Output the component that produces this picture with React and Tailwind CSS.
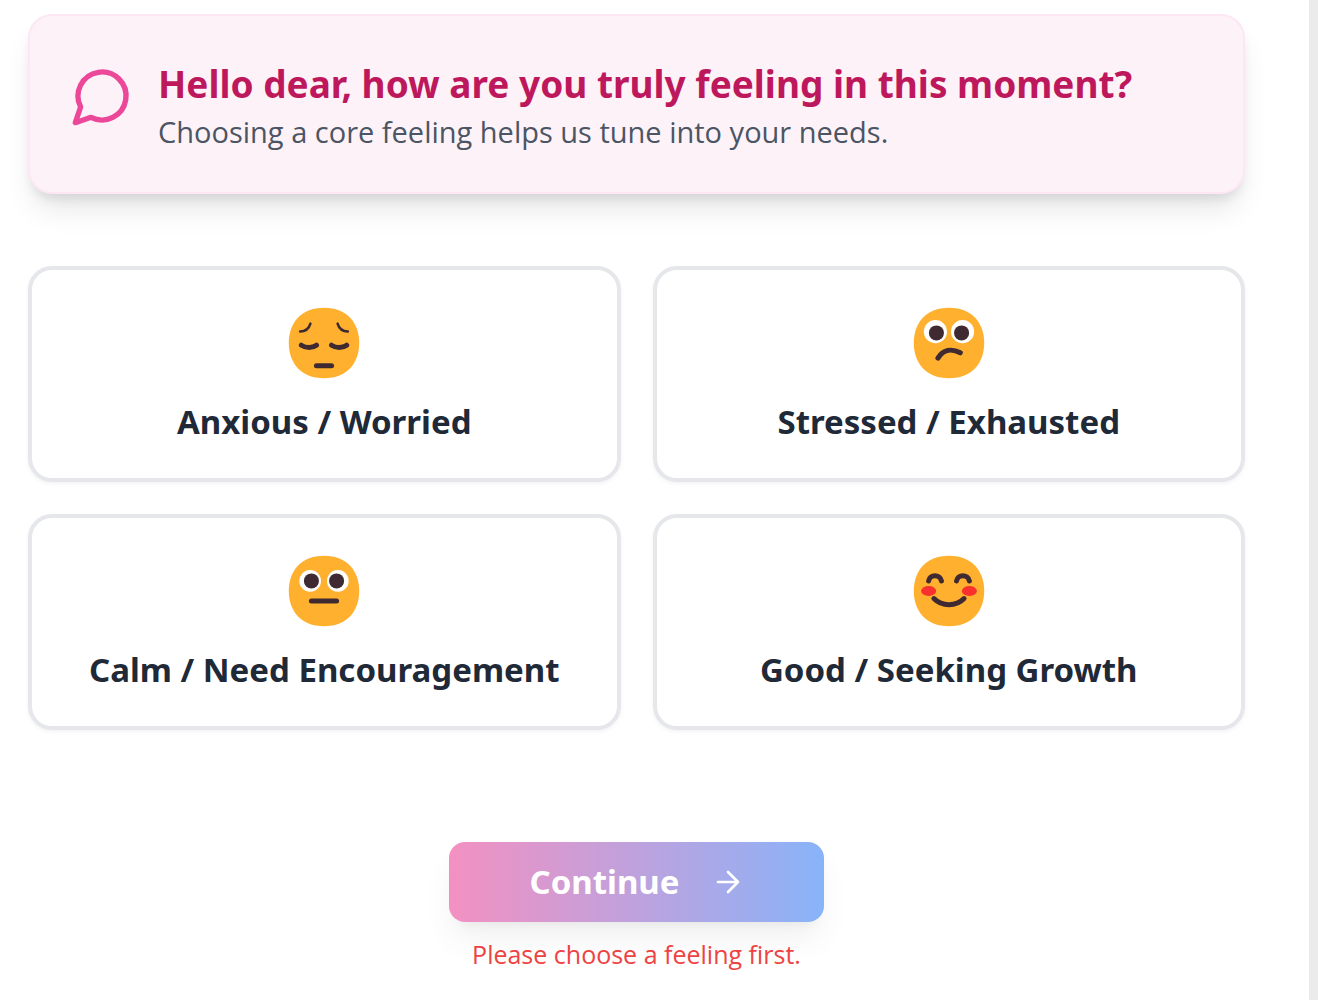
import { useState } from "react";

const INK = "#402A32";

function Face({ children }) {
  return (
    <svg viewBox="0.1 0.1 31.8 31.8" className="size-20" fill="none" aria-hidden="true">
      <path
        d="M16 30c9.33 0 14-6.27 14-14S25.33 2 16 2 2 8.27 2 16s4.67 14 14 14Z"
        fill="#FFB02E"
      />
      {children}
    </svg>
  );
}

function Pensive() {
  return (
    <Face>
      <g stroke={INK} strokeLinecap="round">
        <path d="M6.5 11.4c2 0 3.5-1 4.1-3.1M25.5 11.4c-2 0-3.5-1-4.1-3.1" />
        <path d="M7 16.9c1.8 1.2 4.4 1.2 6 0M19 16.9c1.8 1.2 4.4 1.2 6 0" strokeWidth="2" />
        <path d="M13 25h6" strokeWidth="2" />
      </g>
    </Face>
  );
}

function Confused() {
  return (
    <Face>
      <circle cx="10.6" cy="11.5" r="4.6" fill="#fff" />
      <circle cx="21.4" cy="11.5" r="4.6" fill="#fff" />
      <circle cx="11" cy="12" r="3" fill={INK} />
      <circle cx="21" cy="12" r="3" fill={INK} />
      <path d="M11.6 22c2-3.3 5.4-4 8.9-2.1" stroke={INK} strokeWidth="2" strokeLinecap="round" />
    </Face>
  );
}

function Neutral() {
  return (
    <Face>
      <circle cx="10.5" cy="12" r="4.3" fill="#fff" />
      <circle cx="21.5" cy="12" r="4.3" fill="#fff" />
      <circle cx="11" cy="12" r="3" fill={INK} />
      <circle cx="21" cy="12" r="3" fill={INK} />
      <path d="M11 20h10" stroke={INK} strokeWidth="2" strokeLinecap="round" />
    </Face>
  );
}

function Smiling() {
  return (
    <Face>
      <ellipse cx="7.9" cy="16" rx="3" ry="2" fill="#F8312F" />
      <ellipse cx="24.1" cy="16" rx="3" ry="2" fill="#F8312F" />
      <g stroke={INK} strokeWidth="2" strokeLinecap="round">
        <path d="M7.9 12c.4-2.7 4.6-2.7 5.1 0M19 12c.4-2.7 4.6-2.7 5.1 0" />
        <path d="M10 19c3.2 3.3 8.8 3.3 12 0" />
      </g>
    </Face>
  );
}

const feelings = [
  { label: "Anxious / Worried", Icon: Pensive },
  { label: "Stressed / Exhausted", Icon: Confused },
  { label: "Calm / Need Encouragement", Icon: Neutral },
  { label: "Good / Seeking Growth", Icon: Smiling },
];

export default function App() {
  const [selected, setSelected] = useState(null);

  return (
    <div className="min-h-screen border-r-[9px] border-[#ebebeb] bg-white pt-3.5 pr-16 pl-7 font-['Noto_Sans','Open_Sans',sans-serif]">
      <header className="flex items-start gap-6 rounded-3xl border-2 border-[#fce7f3] bg-[#fdf2f8] p-10 shadow-[0_20px_30px_-6px_rgba(0,0,0,0.1),0_8px_12px_-4px_rgba(0,0,0,0.1)]">
        <svg
          viewBox="0 0 24 24"
          className="mt-2 size-16 shrink-0"
          fill="none"
          stroke="#ec4899"
          strokeWidth="2"
          strokeLinecap="round"
          strokeLinejoin="round"
          aria-hidden="true"
        >
          <path d="M7.9 20A9 9 0 1 0 4 16.1L2 22Z" />
        </svg>
        <div>
          <h1 className="text-[37px] leading-14 font-bold text-[#be185d]">
            Hello dear, how are you truly feeling in this moment?
          </h1>
          <p className="font-['Open_Sans',sans-serif] text-[29px] leading-10 text-[#4b5563]">
            Choosing a core feeling helps us tune into your needs.
          </p>
        </div>
      </header>

      <main>
        <div className="mt-18 grid grid-cols-2 gap-8">
          {feelings.map(({ label, Icon }) => (
            <button
              key={label}
              type="button"
              aria-pressed={selected === label}
              onClick={() => setSelected(label)}
              className="flex flex-col items-center rounded-3xl border-4 border-[#e5e7eb] bg-white px-8 pt-[33px] pb-8 shadow-[0_2px_4px_rgba(0,0,0,0.05)] aria-pressed:border-pink-400"
            >
              <Icon />
              <span className="mt-[15px] text-[33px] leading-12 font-bold text-[#1f2937]">{label}</span>
            </button>
          ))}
        </div>

        <div className="mt-28 flex flex-col items-center">
          <button
            type="button"
            disabled={!selected}
            className="flex h-20 items-center gap-8 rounded-2xl bg-linear-to-r/srgb from-[#ec4899] to-[#3b82f6] px-20 text-[33px] font-bold text-white shadow-[0_20px_30px_-6px_rgba(0,0,0,0.1),0_8px_12px_-8px_rgba(0,0,0,0.1)] disabled:opacity-60"
          >
            Continue
            <svg
              viewBox="0 0 24 24"
              className="size-8"
              fill="none"
              stroke="currentColor"
              strokeWidth="2"
              strokeLinecap="round"
              strokeLinejoin="round"
              aria-hidden="true"
            >
              <path d="M4.5 12h15M12 4.5l7.5 7.5-7.5 7.5" />
            </svg>
          </button>
          {!selected && (
            <p className="mt-3 font-['Open_Sans',sans-serif] text-[25px] leading-10 text-[#ef4444]">
              Please choose a feeling first.
            </p>
          )}
        </div>
      </main>
    </div>
  );
}
